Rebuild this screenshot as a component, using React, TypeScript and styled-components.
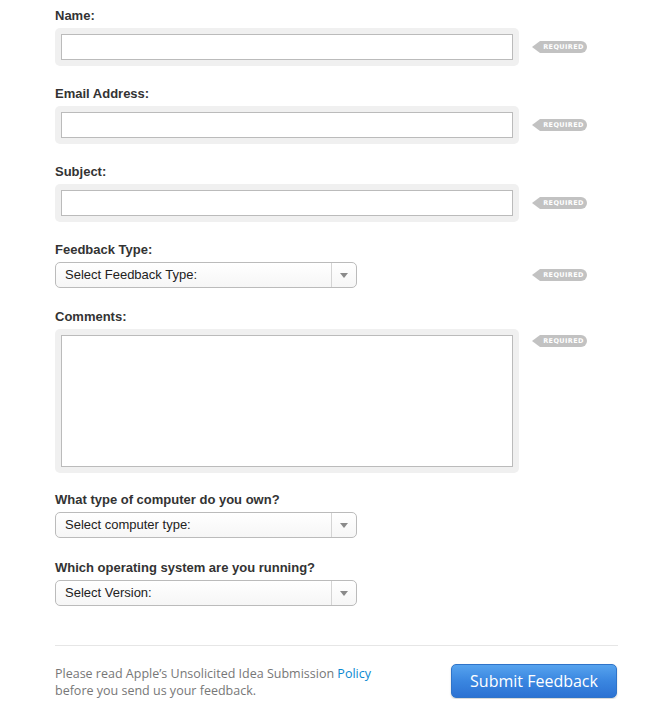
import React from "react";
import styled, { createGlobalStyle } from "styled-components";

const GlobalStyle = createGlobalStyle`
  html, body {
    margin: 0;
    padding: 0;
    background: #ffffff;
  }
  body {
    font-family: "Liberation Sans", Arial, sans-serif;
    color: #333;
  }
`;

const Page = styled.div`
  width: 650px;
  box-sizing: border-box;
  padding: 7px 32px 0 55px;
`;

const Group = styled.div<{ $gap?: number }>`
  margin-bottom: ${(p) => p.$gap ?? 19}px;
`;

const Label = styled.div`
  font-size: 13px;
  font-weight: bold;
  line-height: 16px;
  color: #333;
  padding-top: 1px;
  margin-bottom: 4px;
`;

const Row = styled.div<{ $align?: string }>`
  display: grid;
  grid-template-columns: 477px auto;
  align-items: ${(p) => p.$align ?? "center"};
`;

const Well = styled.div`
  width: 464px;
  box-sizing: border-box;
  padding: 6px;
  background: #f0f0f0;
  border-radius: 5px;
`;

const TextInput = styled.input`
  display: block;
  width: 100%;
  height: 26px;
  box-sizing: border-box;
  margin: 0;
  border: 1px solid #bbbbbb;
  background: #fff;
  outline: none;
  font: 13px "Liberation Sans", Arial, sans-serif;
  padding: 0 6px;
`;

const TextArea = styled.textarea`
  display: block;
  width: 100%;
  height: 132px;
  box-sizing: border-box;
  margin: 0;
  border: 1px solid #bbbbbb;
  background: #fff;
  resize: none;
  outline: none;
  font: 13px "Liberation Sans", Arial, sans-serif;
`;

const Select = styled.div`
  width: 302px;
  height: 26px;
  box-sizing: border-box;
  display: flex;
  border: 1px solid #bbbbbb;
  border-radius: 5px;
  background: linear-gradient(#ffffff, #f6f6f6);
`;

const SelectText = styled.div`
  flex: 1;
  font-size: 13px;
  line-height: 24px;
  padding-left: 9px;
  color: #222;
`;

const SelectArrow = styled.div`
  width: 24px;
  border-left: 1px solid #d4d4d4;
  display: flex;
  align-items: center;
  justify-content: center;

  &::after {
    content: "";
    width: 0;
    height: 0;
    border-left: 4px solid transparent;
    border-right: 4px solid transparent;
    border-top: 5px solid #8a8a8a;
  }
`;

const Tag = styled.div<{ $top?: number }>`
  position: relative;
  justify-self: start;
  margin-left: 8px;
  margin-top: ${(p) => p.$top ?? 0}px;
  height: 12px;
  width: 47px;
  background: #c2c2c2;
  border-radius: 0 6px 6px 0;
  color: #fff;
  font-family: "DejaVu Sans", Verdana, sans-serif;
  font-size: 6.5px;
  font-weight: bold;
  letter-spacing: 0.4px;
  line-height: 12px;
  text-align: center;

  &::before {
    content: "";
    position: absolute;
    left: -8px;
    top: 0;
    border-top: 6px solid transparent;
    border-bottom: 6px solid transparent;
    border-right: 8px solid #c2c2c2;
  }
`;

const Divider = styled.hr`
  border: none;
  border-top: 1px solid #e6e6e6;
  margin: 39px 0 0;
`;

const Footer = styled.div`
  display: flex;
  justify-content: space-between;
  align-items: flex-start;
  padding-top: 18px;
`;

const Note = styled.p`
  margin: 0;
  padding-top: 1px;
  font-family: "Open Sans", sans-serif;
  font-size: 12.5px;
  line-height: 17px;
  color: #777;
`;

const Link = styled.a`
  color: #0b88d1;
  text-decoration: none;
`;

const Submit = styled.button`
  width: 166px;
  height: 34px;
  margin-right: 1px;
  border: 1px solid #2f74c9;
  border-radius: 5px;
  background: linear-gradient(#56a3ee, #3a86e0 50%, #2c72d3);
  color: #fff;
  font-family: "Open Sans", sans-serif;
  font-size: 16px;
  font-weight: 500;
  box-shadow: 0 1px 2px rgba(0, 0, 0, 0.2);
  padding: 0;
  cursor: pointer;
`;

const Required = ({ top }: { top?: number }) => <Tag $top={top}>REQUIRED</Tag>;

const TextField = ({ label }: { label: string }) => (
  <Group>
    <Label>{label}</Label>
    <Row>
      <Well>
        <TextInput type="text" />
      </Well>
      <Required />
    </Row>
  </Group>
);

const SelectField = ({
  label,
  placeholder,
  required,
  gap,
}: {
  label: string;
  placeholder: string;
  required?: boolean;
  gap?: number;
}) => (
  <Group $gap={gap}>
    <Label>{label}</Label>
    <Row>
      <Select>
        <SelectText>{placeholder}</SelectText>
        <SelectArrow />
      </Select>
      {required && <Required />}
    </Row>
  </Group>
);

export default function App() {
  return (
    <Page>
      <GlobalStyle />
      <TextField label="Name:" />
      <TextField label="Email Address:" />
      <TextField label="Subject:" />
      <SelectField
        label="Feedback Type:"
        placeholder="Select Feedback Type:"
        required
        gap={20}
      />
      <Group $gap={18}>
        <Label>Comments:</Label>
        <Row $align="start">
          <Well>
            <TextArea />
          </Well>
          <Required top={6} />
        </Row>
      </Group>
      <SelectField
        label="What type of computer do you own?"
        placeholder="Select computer type:"
        gap={21}
      />
      <SelectField
        label="Which operating system are you running?"
        placeholder="Select Version:"
        gap={0}
      />
      <Divider />
      <Footer>
        <Note>
          Please read Apple’s Unsolicited Idea Submission <Link href="#">Policy</Link>
          <br />
          before you send us your feedback.
        </Note>
        <Submit type="button">Submit Feedback</Submit>
      </Footer>
    </Page>
  );
}
